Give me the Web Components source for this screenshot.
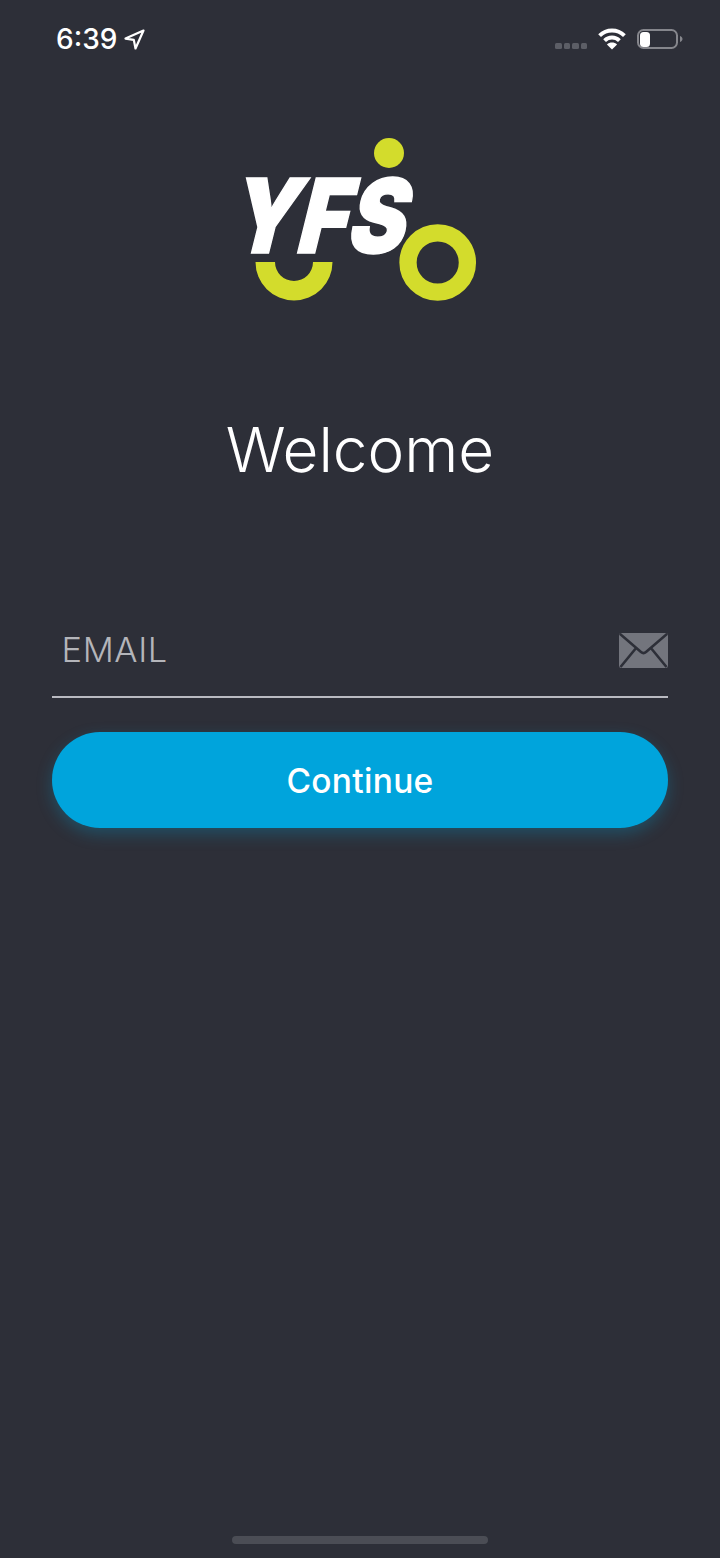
<!DOCTYPE html>
<html>
<head>
<meta charset="utf-8">
<title>YFS</title>
<style>
html, body { margin: 0; padding: 0; background: #2d2f38; }
</style>
</head>
<body>
<login-screen>
  <status-bar slot="status" time="6:39"></status-bar>
  <yfs-logo slot="logo"></yfs-logo>
  <span slot="title">Welcome</span>
  <email-field slot="field">EMAIL</email-field>
  <pill-button slot="action">Continue</pill-button>
</login-screen>

<script>
// small helper, every component is just a template + open shadow root
function makeTemplate(html) {
  const template = document.createElement("template");
  template.innerHTML = html;
  return template;
}

const statusTemplate = makeTemplate(`
<style>
:host { display: flex; align-items: flex-start; justify-content: space-between; height: 78px; color: #fff; }
.left { display: flex; align-items: center; margin: 22px 0 0 56px; font: 500 28px/34px Inter, "Liberation Sans", sans-serif; }
.left svg { margin-left: 7px; }
.right { display: flex; align-items: flex-start; margin: 27px 37px 0 0; }
.dots { display: flex; gap: 2px; margin: 16px 11px 0 0; }
.dots i { width: 6.500px; height: 6px; border-radius: 1.500px; background: #5c5e66; }
.wifi { margin: 1px 11px 0 0; }
.battery { display: block; }
</style>
<div class="left"><span id="time"></span>
  <svg width="21" height="21" viewBox="0 0 21 21"><path d="M19.500 1.500 1.500 9.600l8.300 1.300 1.700 8.600Z" fill="none" stroke="#fff" stroke-width="2.200" stroke-linejoin="round"/></svg>
</div>
<div class="right">
  <div class="dots"><i></i><i></i><i></i><i></i></div>
  <svg class="wifi" width="28" height="22" viewBox="0 0 28 22" fill="none" stroke="#fff" stroke-width="4">
    <path d="M1.600 7.600C8.600 .9 19.400 .9 26.400 7.600"/>
    <path d="M6.600 12.600c4.200-4 10.600-4 14.800 0"/>
    <path d="M14 21.500 8.900 16.400c2.900-2.500 7.300-2.500 10.200 0Z" fill="#fff" stroke="none"/>
  </svg>
  <svg class="battery" width="46" height="24" viewBox="0 0 46 24">
    <rect x="1" y="3" width="39" height="18" rx="5.500" fill="none" stroke="#85868c" stroke-width="2"/>
    <rect x="3" y="5" width="10" height="15" rx="3.500" fill="#fff"/>
    <path d="M43 9c1.600.6 2.500 1.700 2.500 3s-.9 2.400-2.500 3Z" fill="#85868c"/>
  </svg>
</div>
`);

class StatusBar extends HTMLElement {
  constructor() {
    super();
    this.attachShadow({ mode: "open" });
    this.shadowRoot.appendChild(statusTemplate.content.cloneNode(true));
  }
  connectedCallback() {
    this.shadowRoot.getElementById("time").textContent = this.getAttribute("time");
  }
}

const logoTemplate = makeTemplate(`
<style>
:host { display: flex; justify-content: center; }
svg { display: block; margin-left: -4px; overflow: visible; }
text { font-family: Inter, "Liberation Sans", sans-serif; font-weight: 900; fill: #fff; stroke: #fff; stroke-width: 1.500px; }
</style>
<svg width="240" height="170" viewBox="0 0 240 170">
  <circle cx="151" cy="15" r="15" fill="#d3dc2c"/>
  <text transform="translate(-12 114.500) skewX(-14)" font-size="103" textLength="176" lengthAdjust="spacingAndGlyphs">YFS</text>
  <path d="M17.500 124H37a19 19 0 0 0 38 0h19.500a38.250 38.250 0 0 1-77 0Z" fill="#d3dc2c"/>
  <circle cx="199.700" cy="124.500" r="29.700" fill="none" stroke="#d3dc2c" stroke-width="17.300"/>
</svg>
`);

class YfsLogo extends HTMLElement {
  constructor() {
    super();
    this.attachShadow({ mode: "open" });
    this.shadowRoot.appendChild(logoTemplate.content.cloneNode(true));
  }
}

const fieldTemplate = makeTemplate(`
<style>
:host { display: flex; align-items: center; justify-content: space-between; height: 94px; box-sizing: border-box;
  padding: 0 0 0 9.500px; border-bottom: 2px solid #b9bac1; color: #b4b5ba; letter-spacing: 0.600px;
  font: 300 34.500px/40px Inter, "Liberation Sans", sans-serif; }
svg { display: block; }
</style>
<slot></slot>
<svg width="49" height="35" viewBox="0 0 49 35">
  <rect width="49" height="35" rx="2.500" fill="#73757d"/>
  <path d="M.8 .8 22 19a3.800 3.800 0 0 0 5 0L48.200 .8M1.500 34 17.500 14.500M47.500 34 31.500 14.500" fill="none" stroke="#2d2f38" stroke-width="2.600"/>
</svg>
`);

class EmailField extends HTMLElement {
  constructor() {
    super();
    this.attachShadow({ mode: "open" });
    this.shadowRoot.appendChild(fieldTemplate.content.cloneNode(true));
  }
}

const buttonTemplate = makeTemplate(`
<style>
:host { display: flex; align-items: center; justify-content: center; height: 96px; box-sizing: border-box;
  padding-top: 2px; border-radius: 48px; background: #00a4dc; color: #fff;
  box-shadow: 0 6px 16px rgba(0, 164, 220, 0.28);
  font: 550 33.500px/40px Inter, "Liberation Sans", sans-serif; letter-spacing: 0.300px; }
</style>
<slot></slot>
`);

class PillButton extends HTMLElement {
  constructor() {
    super();
    this.attachShadow({ mode: "open" });
    this.shadowRoot.appendChild(buttonTemplate.content.cloneNode(true));
  }
}

const screenTemplate = makeTemplate(`
<style>
:host { display: flex; flex-direction: column; height: 1558px; box-sizing: border-box; background: #2d2f38; }
.logo { padding-top: 60px; }
.title { margin-top: 107px; height: 70px; text-align: center; color: #fff;
  font: 300 62px/70px Inter, "Liberation Sans", sans-serif; }
.form { display: flex; flex-direction: column; gap: 34px; margin-top: 119px; padding: 0 52px; }
.home { width: 256px; height: 8px; border-radius: 4px; background: #4b4d55; margin: auto auto 14px; }
</style>
<slot name="status"></slot>
<div class="logo"><slot name="logo"></slot></div>
<div class="title"><slot name="title"></slot></div>
<div class="form">
  <slot name="field"></slot>
  <slot name="action"></slot>
</div>
<div class="home"></div>
`);

class LoginScreen extends HTMLElement {
  constructor() {
    super();
    this.attachShadow({ mode: "open" });
    this.shadowRoot.appendChild(screenTemplate.content.cloneNode(true));
  }
}

customElements.define("status-bar", StatusBar);
customElements.define("yfs-logo", YfsLogo);
customElements.define("email-field", EmailField);
customElements.define("pill-button", PillButton);
customElements.define("login-screen", LoginScreen);
</script>
</body>
</html>
